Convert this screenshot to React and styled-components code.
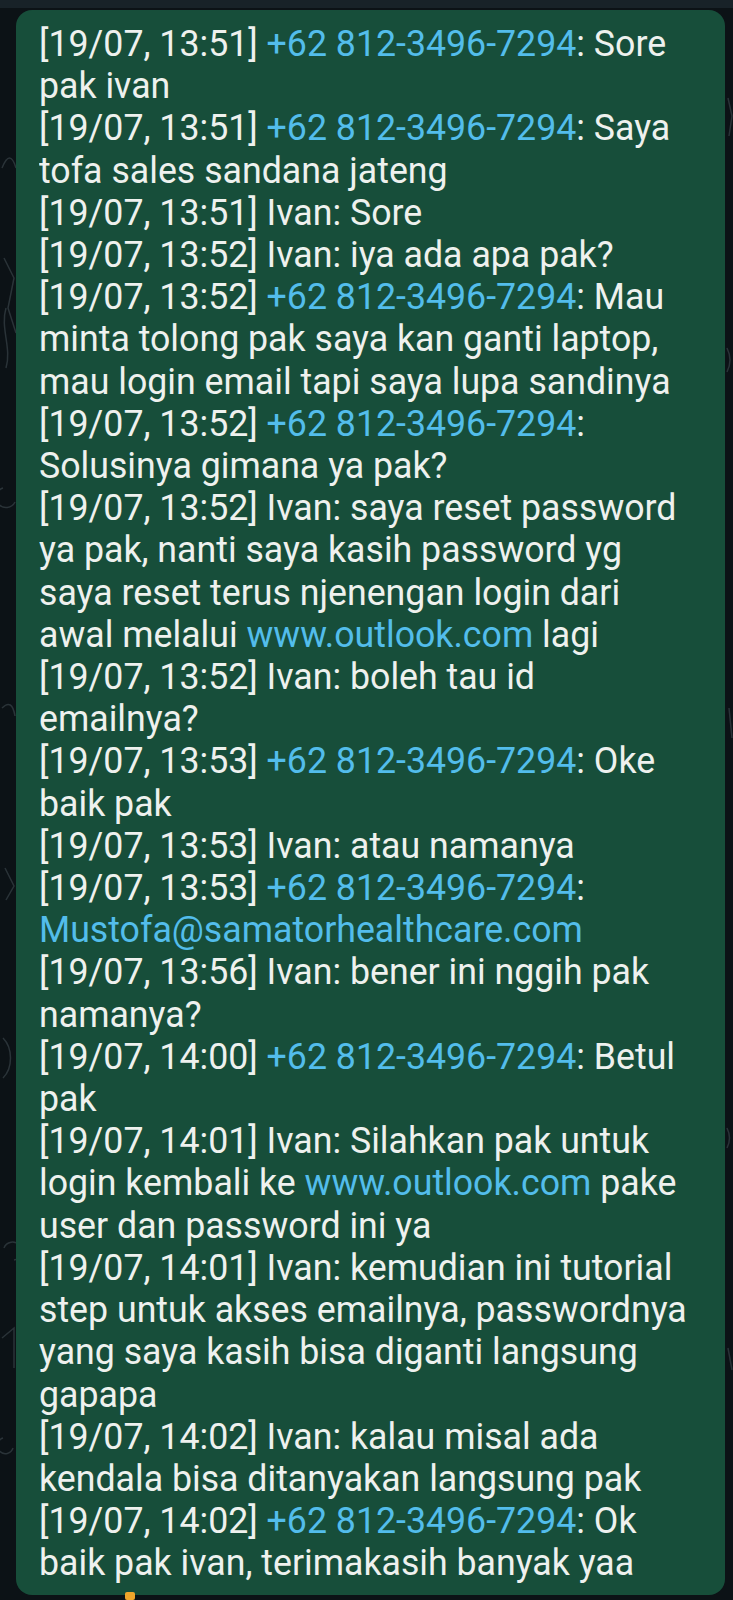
import React from "react";
import styled, { createGlobalStyle } from "styled-components";

const GlobalStyle = createGlobalStyle`
  html, body {
    margin: 0;
    padding: 0;
    background: #0b1115;
  }
  #root {
    min-height: 1600px;
  }
`;

const Page = styled.div`
  position: relative;
  width: 733px;
  min-height: 1600px;
  overflow: hidden;
  background: #0c1216;
  border-top: 8px solid #182228;
  box-sizing: border-box;
  padding: 2px 8px 0 16px;
`;

const Doodles = styled.svg`
  position: absolute;
  inset: 0;
  width: 733px;
  height: 1600px;
  pointer-events: none;
`;

const Bubble = styled.div`
  position: relative;
  background: #174e3a;
  border-radius: 16px;
  padding: 13px 10px 10px 23px;
  font-family: Roboto, "Noto Sans", sans-serif;
  font-size: 37px;
  line-height: 42.2px;
  color: #eef1ee;
`;

const Text = styled.div`
  transform: scaleX(0.965);
  transform-origin: left top;
`;

const Message = styled.div`
  display: block;
`;

const Line = styled.div`
  white-space: nowrap;
`;

const Link = styled.span`
  color: #53bdeb;
`;

const Reaction = styled.span`
  position: absolute;
  left: 109px;
  bottom: -5px;
  width: 10px;
  height: 8px;
  border-radius: 2px;
  background: #f0a52b;
`;

const P = "+62 812-3496-7294";
const a = (t) => ({ a: t });

const messages = [
  [["[19/07, 13:51] ", a(P), ": Sore"], ["pak ivan"]],
  [["[19/07, 13:51] ", a(P), ": Saya"], ["tofa sales sandana jateng"]],
  [["[19/07, 13:51] Ivan: Sore"]],
  [["[19/07, 13:52] Ivan: iya ada apa pak?"]],
  [
    ["[19/07, 13:52] ", a(P), ": Mau"],
    ["minta tolong pak saya kan ganti laptop,"],
    ["mau login email tapi saya lupa sandinya"],
  ],
  [["[19/07, 13:52] ", a(P), ":"], ["Solusinya gimana ya pak?"]],
  [
    ["[19/07, 13:52] Ivan: saya reset password"],
    ["ya pak, nanti saya kasih password yg"],
    ["saya reset terus njenengan login dari"],
    ["awal melalui ", a("www.outlook.com"), " lagi"],
  ],
  [["[19/07, 13:52] Ivan: boleh tau id"], ["emailnya?"]],
  [["[19/07, 13:53] ", a(P), ": Oke"], ["baik pak"]],
  [["[19/07, 13:53] Ivan: atau namanya"]],
  [["[19/07, 13:53] ", a(P), ":"], [a("Mustofa@samatorhealthcare.com")]],
  [["[19/07, 13:56] Ivan: bener ini nggih pak"], ["namanya?"]],
  [["[19/07, 14:00] ", a(P), ": Betul"], ["pak"]],
  [
    ["[19/07, 14:01] Ivan: Silahkan pak untuk"],
    ["login kembali ke ", a("www.outlook.com"), " pake"],
    ["user dan password ini ya"],
  ],
  [
    ["[19/07, 14:01] Ivan: kemudian ini tutorial"],
    ["step untuk akses emailnya, passwordnya"],
    ["yang saya kasih bisa diganti langsung"],
    ["gapapa"],
  ],
  [
    ["[19/07, 14:02] Ivan: kalau misal ada"],
    ["kendala bisa ditanyakan langsung pak"],
  ],
  [["[19/07, 14:02] ", a(P), ": Ok"], ["baik pak ivan, terimakasih banyak yaa"]],
];

export default function App() {
  return (
    <>
      <GlobalStyle />
      <Page>
        <Doodles viewBox="0 0 733 1600" fill="none" stroke="#2a3338" strokeWidth="1.5">
          <path d="M2 160 q8 -20 14 0" />
          <path d="M4 250 l10 20 l-6 30 l8 25" />
          <path d="M6 300 c-6 20 6 40 0 60" />
          <path d="M3 480 a10 10 0 1 0 12 14" />
          <path d="M2 700 q10 -10 13 8" />
          <path d="M5 860 l9 18 l-8 14" />
          <path d="M3 1030 c10 10 10 30 0 40" />
          <path d="M4 1240 a9 9 0 1 1 10 12" />
          <path d="M2 1330 l12 -10 l0 40" />
          <path d="M3 1430 a8 8 0 1 0 10 10" />
          <path d="M728 90 l4 18 l-3 20" />
          <path d="M727 340 q6 12 0 24" />
          <path d="M729 700 l3 30" />
          <path d="M727 1120 q5 10 0 20" />
          <path d="M728 1340 l4 22" />
          <path d="M140 1598 q20 -6 40 0 M260 1598 q30 -5 60 0 M420 1599 q20 -6 40 0" />
        </Doodles>
        <Bubble>
          <Text>
            {messages.map((lines, i) => (
              <Message key={i}>
                {lines.map((segs, j) => (
                  <Line key={j}>
                    {segs.map((s, k) =>
                      typeof s === "string" ? (
                        <React.Fragment key={k}>{s}</React.Fragment>
                      ) : (
                        <Link key={k}>{s.a}</Link>
                      )
                    )}
                  </Line>
                ))}
              </Message>
            ))}
          </Text>
          <Reaction />
        </Bubble>
      </Page>
    </>
  );
}
